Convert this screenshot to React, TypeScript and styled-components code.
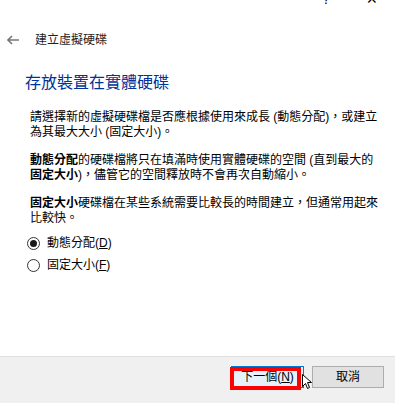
import React from "react";
import styled, { createGlobalStyle } from "styled-components";

const GlobalStyle = createGlobalStyle`
  body {
    margin: 0;
    background: #ffffff;
    font-family: "Liberation Sans", "Noto Sans CJK TC", sans-serif;
    color: #000000;
  }
`;

const StyledDialog = styled.div`
  width: 395px;
  height: 403px;
  display: flex;
  flex-direction: column;
  background: #ffffff;
`;

const StyledTitleBar = styled.div`
  height: 6px;
  overflow: hidden;
  display: flex;
  justify-content: flex-end;
  align-items: flex-end;
  gap: 36px;
  padding-right: 17px;
  font-size: 14px;
  line-height: 14px;
  color: #000;
`;

const StyledCaptionGlyph = styled.span`
  display: block;
  height: 14px;
`;

const StyledNavRow = styled.div`
  display: flex;
  align-items: center;
  gap: 16px;
  padding: 27px 0 0 7px;
  height: 14px;
`;

const StyledNavTitle = styled.span`
  font-size: 12px;
  line-height: 14px;
  color: #1e1e1e;
`;

const StyledBody = styled.div`
  padding: 26px 0 0 25px;
`;

const StyledHeading = styled.h1`
  margin: 0 0 17px;
  font-size: 16px;
  line-height: 20px;
  font-weight: normal;
  color: #003399;
`;

const StyledParagraph = styled.p`
  margin: 0 0 13px 5px;
  font-size: 12px;
  line-height: 15px;
  white-space: nowrap;
`;

const StyledRadioList = styled.div`
  display: flex;
  flex-direction: column;
  gap: 8px;
  margin-top: -3px;
`;

const StyledRadioRow = styled.label`
  display: flex;
  align-items: center;
  gap: 7px;
  height: 14px;
  font-size: 12px;
  line-height: 14px;
  padding-left: 2px;
`;

const StyledRadioCircle = styled.span<{ $checked?: boolean }>`
  width: 11px;
  height: 11px;
  border: 1px solid #333;
  border-radius: 50%;
  display: flex;
  align-items: center;
  justify-content: center;
  &::after {
    content: "";
    display: ${(p) => (p.$checked ? "block" : "none")};
    width: 7px;
    height: 7px;
    border-radius: 50%;
    background: #1a1a1a;
  }
`;

const StyledFooter = styled.div`
  margin-top: auto;
  height: 37px;
  border-top: 1px solid #dfdfdf;
  background: #f0f0f0;
  display: flex;
  justify-content: flex-end;
  align-items: flex-start;
  gap: 8px;
  padding: 9px 11px 0 0;
`;

const StyledButtonSlot = styled.div`
  position: relative;
`;

const StyledButton = styled.button<{ $primary?: boolean }>`
  width: ${(p) => (p.$primary ? "73px" : "72px")};
  height: 22px;
  padding: 0;
  font-family: inherit;
  font-size: 12px;
  line-height: 14px;
  color: #000;
  background: ${(p) => (p.$primary ? "#e5f1fb" : "#e1e1e1")};
  border: 1px solid ${(p) => (p.$primary ? "#0078d7" : "#adadad")};
`;

const StyledHighlight = styled.span`
  position: absolute;
  left: -1px;
  top: 1px;
  right: 3px;
  bottom: -2px;
  border: 4px solid #ff0000;
  pointer-events: none;
`;

const StyledCursor = styled.svg`
  position: absolute;
  left: 71px;
  top: 8px;
`;

const Mnemonic = styled.span`
  text-decoration: underline;
`;

const App = () => {
  const [mode, setMode] = React.useState<"dynamic" | "fixed">("dynamic");

  return (
    <StyledDialog>
      <GlobalStyle />
      <StyledTitleBar>
        <StyledCaptionGlyph>?</StyledCaptionGlyph>
        <StyledCaptionGlyph>✕</StyledCaptionGlyph>
      </StyledTitleBar>

      <StyledNavRow>
        <svg width="12" height="10" viewBox="0 0 12 10">
          <path d="M5 1 L1 5 L5 9 M1 5 H12" stroke="#777" strokeWidth="1.6" fill="none" />
        </svg>
        <StyledNavTitle>建立虛擬硬碟</StyledNavTitle>
      </StyledNavRow>

      <StyledBody>
        <StyledHeading>存放裝置在實體硬碟</StyledHeading>

        <StyledParagraph>
          請選擇新的虛擬硬碟檔是否應根據使用來成長 (動態分配)，或建立
          <br />
          為其最大大小 (固定大小)。
        </StyledParagraph>

        <StyledParagraph>
          <b>動態分配</b>的硬碟檔將只在填滿時使用實體硬碟的空間 (直到最大的
          <br />
          <b>固定大小</b>)，儘管它的空間釋放時不會再次自動縮小。
        </StyledParagraph>

        <StyledParagraph>
          <b>固定大小</b>硬碟檔在某些系統需要比較長的時間建立，但通常用起來
          <br />
          比較快。
        </StyledParagraph>

        <StyledRadioList>
          <StyledRadioRow onClick={() => setMode("dynamic")}>
            <StyledRadioCircle $checked={mode === "dynamic"} />
            <span>
              動態分配(<Mnemonic>D</Mnemonic>)
            </span>
          </StyledRadioRow>
          <StyledRadioRow onClick={() => setMode("fixed")}>
            <StyledRadioCircle $checked={mode === "fixed"} />
            <span>
              固定大小(<Mnemonic>F</Mnemonic>)
            </span>
          </StyledRadioRow>
        </StyledRadioList>
      </StyledBody>

      <StyledFooter>
        <StyledButtonSlot>
          <StyledButton $primary>
            下一個(<Mnemonic>N</Mnemonic>)
          </StyledButton>
          <StyledHighlight />
          <StyledCursor width="11" height="16" viewBox="0 0 11 16">
            <path
              d="M0.5 0.5 L0.5 12.5 L3.5 9.5 L5.5 14.5 L7.5 13.5 L5.5 8.5 L9.5 8.5 Z"
              fill="#ffffff"
              stroke="#000000"
              strokeWidth="1"
            />
          </StyledCursor>
        </StyledButtonSlot>
        <StyledButton>取消</StyledButton>
      </StyledFooter>
    </StyledDialog>
  );
};

export default App;
